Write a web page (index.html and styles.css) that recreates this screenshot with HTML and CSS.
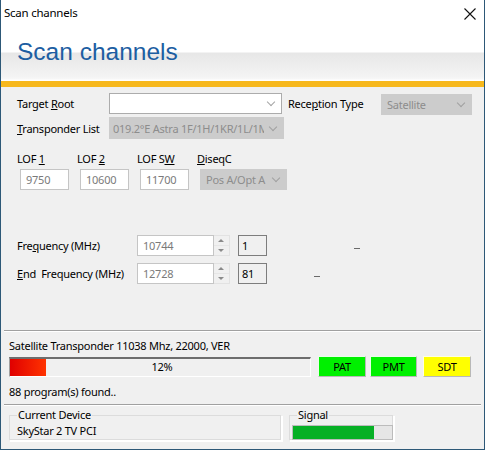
FILE: index.html
```html
<!DOCTYPE html>
<html>
<head>
<meta charset="utf-8">
<link rel="stylesheet" href="styles.css">
</head>
<body>
<div class="window">
  <div class="titlebar">
    <span class="title">Scan channels</span>
    <svg class="close" width="12" height="12" viewBox="0 0 12 12"><path d="M0.5 0.5 L11.5 11.5 M11.5 0.5 L0.5 11.5" stroke="#111" stroke-width="1.1" fill="none"/></svg>
  </div>
  <div class="header"><span class="bigtitle">Scan channels</span></div>
  <div class="accent"></div>
  <div class="content">
    <div class="row r1">
      <span class="lbl w92">Target <u>R</u>oot</span>
      <div class="combo c-target"><span></span><i class="chev"></i></div>
      <span class="lbl w93 ml6">Rece<u>p</u>tion Type</span>
      <div class="combo dis c-rec"><span>Satellite</span><i class="chev"></i></div>
    </div>
    <div class="row r2">
      <span class="lbl w92"><u>T</u>ransponder List</span>
      <div class="combo dis c-tp"><span>019.2°E Astra 1F/1H/1KR/1L/1M</span><i class="chev"></i></div>
    </div>
    <div class="lofs">
      <div class="lofcol"><span class="lbl">LOF <u>1</u></span><div class="field">9750</div></div>
      <div class="lofcol"><span class="lbl">LOF <u>2</u></span><div class="field">10600</div></div>
      <div class="lofcol"><span class="lbl">LOF S<u>W</u></span><div class="field">11700</div></div>
      <div class="lofcol"><span class="lbl"><u>D</u>iseqC</span><div class="combo dis c-dsq"><span>Pos A/Opt A</span><i class="chev"></i></div></div>
    </div>
    <div class="row fr1">
      <span class="lbl w120">Fre<u>q</u>uency (MHz)</span>
      <div class="field ffield">10744</div>
      <div class="spin"><span class="up"></span><span class="dn"></span></div>
      <div class="box">1</div>
      <span class="dash d1"></span>
    </div>
    <div class="row fr2">
      <span class="lbl w120"><u>E</u>nd&nbsp; Frequency (MHz)</span>
      <div class="field ffield">12728</div>
      <div class="spin"><span class="up"></span><span class="dn"></span></div>
      <div class="box">81</div>
      <span class="dash d2"></span>
    </div>
    <div class="sep s1"></div>
    <div class="status">Satellite Transponder 11038 Mhz, 22000, VER</div>
    <div class="row prow">
      <div class="progress"><div class="fill" style="width:36px"></div><span class="pct">12%</span></div>
      <div class="tbl green">PAT</div>
      <div class="tbl green">PMT</div>
      <div class="tbl yellow">SDT</div>
    </div>
    <div class="found">88 program(s) found..</div>
    <div class="sep s2"></div>
    <div class="row groups">
      <div class="group g-dev"><span class="glbl">Current Device</span><span class="gval">SkyStar 2 TV PCI</span></div>
      <div class="group g-sig"><span class="glbl">Signal</span><div class="sigbar"><div class="sigfill" style="width:81px"></div></div></div>
    </div>
  </div>
</div>
</body>
</html>
```
FILE: styles.css
```css
* { box-sizing: border-box; }
html, body { margin: 0; padding: 0; }
body {
  width: 486px; height: 451px; background: #fff; overflow: hidden;
  font-family: "Noto Sans", "Open Sans", sans-serif; font-size: 11px; letter-spacing: -0.25px; color: #000;
}
.window {
  width: 485px; height: 450px;
  border-left: 1px solid #2d5877; border-right: 1px solid #2d5877; border-bottom: 1px solid #2d5877;
  display: flex; flex-direction: column; background: #f0f0f0;
}
.titlebar {
  height: 30px; background: #fff; display: flex; align-items: center;
  padding-left: 3px; padding-right: 8px; justify-content: space-between;
}
.title { font-size: 11.5px; margin-top: -5px; }
.close { margin-top: -3px; margin-right: 0px; }
.header {
  height: 51px;
  background: linear-gradient(to bottom, #fff 0, #fff 22px, #e7e7e7 23px, #f3f3f3 46px, #f7f7f7 49px, #fff 50px);
  padding-left: 16px;
}
.bigtitle {
  display: block; font-family: "Liberation Sans", Arial, sans-serif; font-size: 24.5px; letter-spacing: 0;
  color: #1d5ea2; line-height: 28px; padding-top: 8px;
}
.accent { height: 6px; background: #f7b81c; }
.content { flex: 1; padding-left: 16px; }
.row { display: flex; align-items: center; }
.lbl { white-space: nowrap; }
.w92 { width: 92px; flex: none; }
.w93 { width: 93px; flex: none; }
.w120 { width: 120px; flex: none; }
.ml6 { margin-left: 6px; }
.combo {
  height: 21px; border: 1px solid #acacac; background: #fff; display: flex; align-items: center;
  position: relative; padding-left: 5px; overflow: hidden; flex: none;
}
.combo span { white-space: nowrap; overflow: hidden; flex: 1; }
.combo.dis { background: #cccccc; border-color: #cccccc; color: #8d8d8d; }
.chev {
  width: 6px; height: 6px; border-right: 1px solid #a5a5a5; border-bottom: 1px solid #a5a5a5;
  transform: rotate(45deg); margin: -3px 7px 0 6px; flex: none;
}
.combo.dis .chev { border-color: #a0a0a0; }
.r1 { margin-top: 6px; height: 21px; }
.c-target { width: 173px; height: 21px; }
.c-rec { width: 91px; margin-top: 2px; }
.r2 { margin-top: 3px; height: 22px; }
.c-tp { width: 175px; height: 22px; padding-left: 3px; }
.lofs { display: flex; margin-top: 12px; }
.lofcol { width: 60px; display: flex; flex-direction: column; }
.lofcol .lbl { height: 18px; line-height: 16px; }
.field {
  height: 21px; border: 1px solid #c5c5c5; background: #fff; color: #7a7a7a;
  padding-left: 5px; line-height: 19px; margin-left: 3px; width: 49px;
}
.c-dsq { width: 87px; margin-left: 3px; }
.fr1 { margin-top: 45px; height: 21px; }
.fr2 { margin-top: 7px; height: 21px; }
.ffield { width: 77px; margin-left: 0; flex: none; }
.spin {
  width: 16px; height: 21px; margin-left: 0px; display: flex; flex-direction: column; flex: none;
  background: #f0f0f0; border: 1px solid #e2e2e2; border-left: none;
}
.spin span { flex: 1; position: relative; }
.spin .up { border-bottom: 1px solid #e6e6e6; }
.spin .up::after, .spin .dn::after {
  content: ""; position: absolute; left: 4px; width: 0; height: 0;
  border-left: 3px solid transparent; border-right: 3px solid transparent;
}
.spin .up::after { top: 3px; border-bottom: 3px solid #8a8a8a; }
.spin .dn::after { top: 3px; border-top: 3px solid #8a8a8a; }
.box {
  width: 29px; height: 21px; border: 1px solid #7d7d7d; margin-left: 8px; padding-left: 3px;
  line-height: 19px; flex: none;
}
.dash { display: block; width: 6px; height: 1px; background: #6a6a6a; flex: none; }
.d1 { margin-left: 87px; margin-top: 6px; }
.d2 { margin-left: 47px; margin-top: 6px; }
.sep { height: 2px; border-top: 1px solid #a0a0a0; border-bottom: 1px solid #fff; margin-left: -13px; width: 477px; }
.s1 { margin-top: 46px; }
.status { margin-left: -8px; margin-top: 6px; height: 16px; line-height: 16px; }
.prow { margin-left: -8px; margin-top: 2px; height: 21px; }
.progress {
  width: 302px; height: 20px; position: relative; background: #f0f0f0;
  border-top: 2px solid #6d6d6d; border-left: 1px solid #a0a0a0; border-bottom: 1px solid #fff; border-right: 1px solid #fff;
  margin-top: 1px;
}
.fill { height: 100%; background: linear-gradient(to right, #e00000, #ff3300); }
.pct { position: absolute; left: 0; right: 0; top: 0; text-align: center; line-height: 16px; margin-left: 4px; }
.tbl {
  height: 21px; width: 48px; text-align: center; line-height: 20px; margin-left: 7px;
  border-top: 1px solid #e8ffe8; border-left: 1px solid #e8ffe8; border-bottom: 1px solid #b8b8b8; border-right: 1px solid #b8b8b8;
}
.tbl.green { background: #00f000; }
.tbl.green + .tbl.green { margin-left: 4px; width: 47px; }
.tbl.yellow { background: #ffff00; margin-left: 6px; border-top-color: #ffffe0; border-left-color: #ffffe0; }
.found { margin-left: -8px; margin-top: 6px; height: 17px; line-height: 17px; }
.s2 { margin-top: 4px; }
.groups { margin-left: -8px; margin-top: 9px; align-items: flex-start; }
.group {
  border: 1px solid #dcdcdc; border-right-color: #fff; border-bottom-color: #fff;
  box-shadow: inset -1px -1px 0 #dcdcdc, 1px 1px 0 #fff;
  position: relative; height: 26px;
}
.g-dev { width: 273px; }
.g-sig { width: 105px; margin-left: 7px; }
.glbl {
  position: absolute; top: -9px; left: 7px; background: #f0f0f0; padding: 0 1px; line-height: 16px;
}
.gval { position: absolute; left: 7px; top: 7px; line-height: 16px; }
.sigbar {
  position: absolute; left: 2px; top: 9px; width: 101px; height: 15px;
  background: #e6e6e6; border: 1px solid #bcbcbc;
}
.sigfill { height: 100%; background: #06b025; }
```
